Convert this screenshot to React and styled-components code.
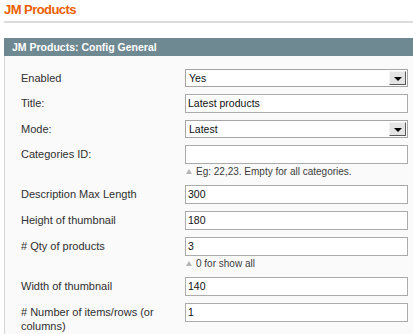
import React from "react";
import styled, { createGlobalStyle } from "styled-components";

const Global = createGlobalStyle`
  html, body { margin: 0; padding: 0; background: #ffffff; }
  body { font-family: "Liberation Sans", Arial, sans-serif; }
  * { box-sizing: border-box; }
`;

const Page = styled.div`
  padding-left: 4px;
  width: 413px;
`;

const PageTitle = styled.h3`
  margin: 0;
  height: 21px;
  line-height: 20px;
  font-size: 13px;
  font-weight: bold;
  letter-spacing: -0.55px;
  color: #eb5e00;
`;

const Divider = styled.div`
  height: 2px;
  background: #dcdcdc;
  margin-bottom: 15px;
`;

const Fieldset = styled.section`
  display: flex;
  flex-direction: column;
`;

const Legend = styled.div`
  height: 18px;
  line-height: 18px;
  padding-left: 8px;
  background: #6f8992;
  color: #ffffff;
  font-size: 10.5px;
  font-weight: bold;
`;

const Body = styled.div`
  background: #fafafa;
  border-left: 1px solid #d6d6d6;
  padding: 13px 0 0 16px;
  display: flex;
  flex-direction: column;
`;

const Row = styled.div`
  display: grid;
  grid-template-columns: 164px 223px;
  padding-bottom: ${(p) => (p.$tight ? 6 : 7)}px;
`;

const Label = styled.label`
  padding: 2px 10px 0 0;
  font-size: 11px;
  line-height: 14px;
  color: #2f2f2f;
`;

const Value = styled.div`
  display: flex;
  flex-direction: column;
`;

const TextInput = styled.div`
  height: 19px;
  border: 1px solid #ababab;
  background: #ffffff;
  padding: 0 2px;
  font-size: 10.5px;
  line-height: 17px;
  color: #111;
`;

const SelectField = styled.div`
  height: 18px;
  border: 1px solid #a5a5a5;
  background: #ffffff;
  display: flex;
  align-items: stretch;
`;

const SelectValue = styled.span`
  flex: 1;
  padding-left: 3px;
  font-size: 10.5px;
  line-height: 16px;
  color: #111;
`;

const DropButton = styled.span`
  width: 17px;
  margin: 1px 1px 1px 0;
  background: #e4e4e4;
  border-top: 1px solid #f4f4f4;
  border-left: 1px solid #f4f4f4;
  border-right: 1px solid #5a5a5a;
  border-bottom: 1px solid #5a5a5a;
  display: flex;
  align-items: flex-end;
  justify-content: center;
  padding-bottom: 3px;
`;

const Hint = styled.div`
  margin-top: 1px;
  height: 13px;
  font-size: 10px;
  line-height: 13px;
  color: #3a3a3a;
  display: flex;
  align-items: center;
  gap: 4px;
`;

const HintArrow = styled.span`
  width: 0;
  height: 0;
  border-left: 3px solid transparent;
  border-right: 3px solid transparent;
  border-bottom: 5px solid #b4b4b4;
  margin-left: 1px;
`;

const Triangle = () => (
  <svg width="8" height="4" viewBox="0 0 8 4">
    <polygon points="0,0 8,0 4,4" fill="#000" />
  </svg>
);

const Select = ({ value }) => (
  <SelectField>
    <SelectValue>{value}</SelectValue>
    <DropButton>
      <Triangle />
    </DropButton>
  </SelectField>
);

const fields = [
  { label: "Enabled", select: "Yes" },
  { label: "Title:", value: "Latest products" },
  { label: "Mode:", select: "Latest" },
  { label: "Categories ID:", value: "", hint: "Eg: 22,23. Empty for all categories." },
  { label: "Description Max Length", value: "300" },
  { label: "Height of thumbnail", value: "180" },
  { label: "# Qty of products", value: "3", hint: "0 for show all" },
  { label: "Width of thumbnail", value: "140" },
  { label: "# Number of items/rows (or columns)", value: "1" },
];

export default function App() {
  return (
    <Page>
      <Global />
      <PageTitle>JM Products</PageTitle>
      <Divider />
      <Fieldset>
        <Legend>JM Products: Config General</Legend>
        <Body>
          {fields.map((f) => (
            <Row key={f.label}>
              <Label>{f.label}</Label>
              <Value>
                {f.select !== undefined ? (
                  <Select value={f.select} />
                ) : (
                  <TextInput>{f.value}</TextInput>
                )}
                {f.hint && (
                  <Hint>
                    <HintArrow />
                    <span>{f.hint}</span>
                  </Hint>
                )}
              </Value>
            </Row>
          ))}
        </Body>
      </Fieldset>
    </Page>
  );
}
